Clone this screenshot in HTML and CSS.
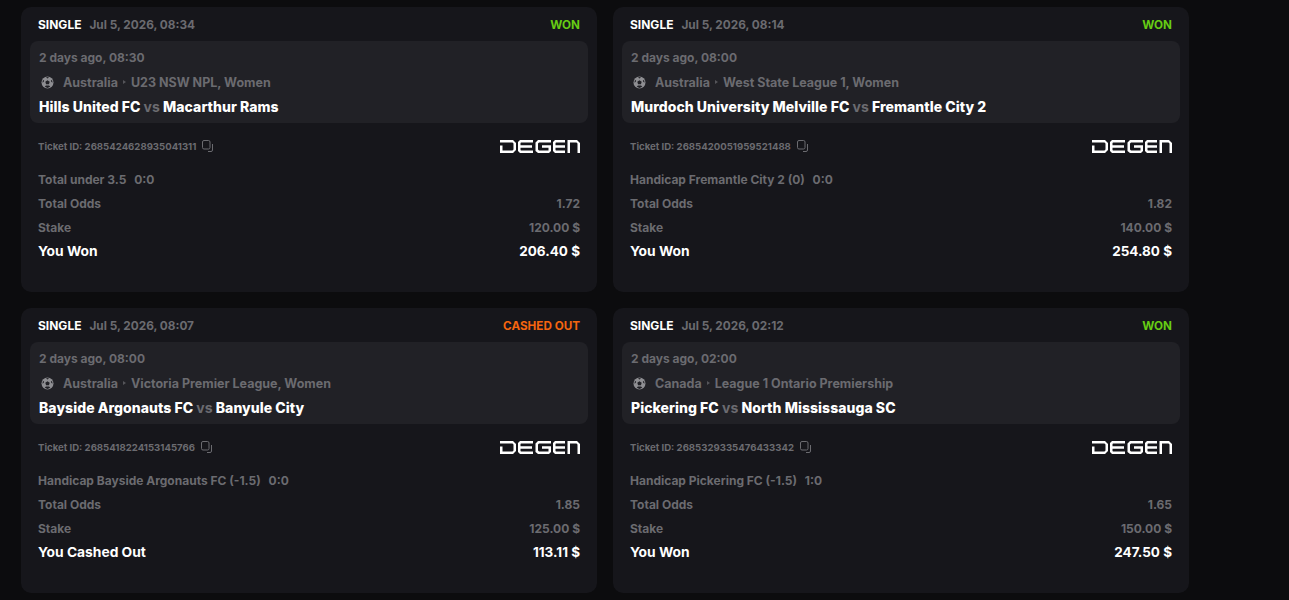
FILE: index.html
```html
<!DOCTYPE html>
<html lang="en">
<head>
    <meta charset="UTF-8">
    <meta name="viewport" content="width=device-width, initial-scale=1.0">
    <title>Bet history</title>
    <link rel="stylesheet" href="styles.css">
</head>
<body>
    <svg class="defs" width="0" height="0">
        <symbol id="ball" viewBox="0 0 13 13">
            <circle cx="6.500" cy="6.500" r="6" fill="#8e8e92"/>
            <path d="M6.500 4.200 8.700 5.800 7.900 8.300H5.100L4.300 5.800Z" fill="#212126"/>
            <path d="M5 1.500 6.500 2.400 8 1.500 6.500 1ZM1.800 4.600 1.500 6.800 2.800 5.800 3.100 4ZM11.200 4.600 11.500 6.800 10.200 5.800 9.900 4ZM3.800 10.800 4.900 9.600H8.100L9.200 10.800 6.500 11.900Z" fill="#212126"/>
        </symbol>
        <symbol id="copy" viewBox="0 0 12 12">
            <rect x=".5" y=".5" width="7.500" height="8.500" rx="1.500" fill="none" stroke="currentColor"/>
            <path d="M10.500 4v6a1.500 1.500 0 0 1-1.500 1.500H6" fill="none" stroke="currentColor"/>
        </symbol>
        <symbol id="degen" viewBox="0 0 80 13">
            <path fill="currentColor" d="M0 0H13L16 3V10L13 13H0V5.500H2.500V10.500H12.500L13.500 9.500V3.500L12.500 2.500H0Z"/>
            <path fill="currentColor" d="M20 0H33V2.500H21L20.500 3V5.300H32V7.700H20.500V10L21 10.500H33V13H20L18 11V2Z"/>
            <path fill="currentColor" d="M38 0H51V2.500H39L38 3.500V9.500L39 10.500H48.500V7.700H42V5.300H51V11L49 13H38L35.500 11V2.500Z"/>
            <path fill="currentColor" d="M55 0H65V2.500H56L55.500 3V5.300H65V7.700H55.500V10L56 10.500H65V13H55L53 11V2Z"/>
            <path fill="currentColor" d="M67.500 0H77L80 3V13H77.500V3.500L76.500 2.500H70V13H67.500Z"/>
        </symbol>
    </svg>

    <div class="tickets">
        <div class="card">
            <div class="card-head">
                <div><span class="type">SINGLE</span><span class="date">Jul 5, 2026, 08:34</span></div>
                <span class="status won">WON</span>
            </div>
            <div class="match">
                <div class="match-time">2 days ago, 08:30</div>
                <div class="league">
                    <svg class="ball"><use href="#ball"/></svg>
                    <span>Australia</span><i class="arrow"></i><span>U23 NSW NPL, Women</span>
                </div>
                <div class="teams">Hills United FC <em>vs</em> Macarthur Rams</div>
            </div>
            <div class="ticket-row">
                <div class="ticket-id">Ticket ID: 2685424628935041311 <svg class="copy"><use href="#copy"/></svg></div>
                <svg class="logo"><use href="#degen"/></svg>
            </div>
            <div class="line"><span>Total under 3.5 <b>0:0</b></span></div>
            <div class="line"><span>Total Odds</span><span>1.72</span></div>
            <div class="line"><span>Stake</span><span>120.00 $</span></div>
            <div class="line total"><span>You Won</span><span class="amount">206.40 $</span></div>
        </div>

        <div class="card">
            <div class="card-head">
                <div><span class="type">SINGLE</span><span class="date">Jul 5, 2026, 08:14</span></div>
                <span class="status won">WON</span>
            </div>
            <div class="match">
                <div class="match-time">2 days ago, 08:00</div>
                <div class="league">
                    <svg class="ball"><use href="#ball"/></svg>
                    <span>Australia</span><i class="arrow"></i><span>West State League 1, Women</span>
                </div>
                <div class="teams">Murdoch University Melville FC <em>vs</em> Fremantle City 2</div>
            </div>
            <div class="ticket-row">
                <div class="ticket-id">Ticket ID: 2685420051959521488 <svg class="copy"><use href="#copy"/></svg></div>
                <svg class="logo"><use href="#degen"/></svg>
            </div>
            <div class="line"><span>Handicap Fremantle City 2 (0) <b>0:0</b></span></div>
            <div class="line"><span>Total Odds</span><span>1.82</span></div>
            <div class="line"><span>Stake</span><span>140.00 $</span></div>
            <div class="line total"><span>You Won</span><span class="amount">254.80 $</span></div>
        </div>

        <div class="card">
            <div class="card-head">
                <div><span class="type">SINGLE</span><span class="date">Jul 5, 2026, 08:07</span></div>
                <span class="status cashed">CASHED OUT</span>
            </div>
            <div class="match">
                <div class="match-time">2 days ago, 08:00</div>
                <div class="league">
                    <svg class="ball"><use href="#ball"/></svg>
                    <span>Australia</span><i class="arrow"></i><span>Victoria Premier League, Women</span>
                </div>
                <div class="teams">Bayside Argonauts FC <em>vs</em> Banyule City</div>
            </div>
            <div class="ticket-row">
                <div class="ticket-id">Ticket ID: 2685418224153145766 <svg class="copy"><use href="#copy"/></svg></div>
                <svg class="logo"><use href="#degen"/></svg>
            </div>
            <div class="line"><span>Handicap Bayside Argonauts FC (-1.5) <b>0:0</b></span></div>
            <div class="line"><span>Total Odds</span><span>1.85</span></div>
            <div class="line"><span>Stake</span><span>125.00 $</span></div>
            <div class="line total"><span>You Cashed Out</span><span class="amount">113.11 $</span></div>
        </div>

        <div class="card">
            <div class="card-head">
                <div><span class="type">SINGLE</span><span class="date">Jul 5, 2026, 02:12</span></div>
                <span class="status won">WON</span>
            </div>
            <div class="match">
                <div class="match-time">2 days ago, 02:00</div>
                <div class="league">
                    <svg class="ball"><use href="#ball"/></svg>
                    <span>Canada</span><i class="arrow"></i><span>League 1 Ontario Premiership</span>
                </div>
                <div class="teams">Pickering FC <em>vs</em> North Mississauga SC</div>
            </div>
            <div class="ticket-row">
                <div class="ticket-id">Ticket ID: 2685329335476433342 <svg class="copy"><use href="#copy"/></svg></div>
                <svg class="logo"><use href="#degen"/></svg>
            </div>
            <div class="line"><span>Handicap Pickering FC (-1.5) <b>1:0</b></span></div>
            <div class="line"><span>Total Odds</span><span>1.65</span></div>
            <div class="line"><span>Stake</span><span>150.00 $</span></div>
            <div class="line total"><span>You Won</span><span class="amount">247.50 $</span></div>
        </div>
    </div>
</body>
</html>
```

FILE: styles.css
```css
html, body {
    height: 100%;
}
body {
    margin: 0;
    overflow: hidden;
    font-family: Inter, "Liberation Sans", sans-serif;
    font-size: 12px;
    font-weight: 700;
    color: #6b6b70;
    background-color: #0c0c0e;
}
.defs {
    display: block;
}
.tickets {
    display: grid;
    grid-template-columns: 576px 576px;
    grid-auto-rows: 285px;
    gap: 16px;
    padding: 7px 0 0 21px;
}
.card {
    padding: 0 9px;
    background-color: #16161b;
    border-radius: 10px;
}
.card-head {
    display: flex;
    justify-content: space-between;
    align-items: center;
    height: 34px;
    padding-left: 8px;
}
.type {
    color: #fff;
}
.date {
    margin-left: 8px;
    font-size: 11.800px;
}
.status {
    padding: 1px 8px 0 0;
    font-size: 11.700px;
}
.won {
    color: #66cc14;
}
.cashed {
    color: #f5650f;
}
.match {
    height: 82px;
    box-sizing: border-box;
    padding: 5px 9px 0;
    background-color: #212126;
    border-radius: 8px;
}
.match-time {
    height: 24px;
    line-height: 24px;
}
.league {
    display: flex;
    align-items: center;
    height: 24px;
    font-size: 12.500px;
}
.ball {
    width: 13px;
    height: 13px;
    margin: 0 9px 0 2px;
}
.arrow {
    width: 0;
    height: 0;
    margin: 0 5px;
    border-left: 3px solid #55555a;
    border-top: 2px solid transparent;
    border-bottom: 2px solid transparent;
}
.teams {
    height: 24px;
    line-height: 26px;
    color: #fff;
    font-size: 14px;
    font-weight: 800;
    letter-spacing: .05px;
}
.teams em {
    color: #6b6b70;
    font-style: normal;
    font-weight: 700;
}
.ticket-row {
    display: flex;
    justify-content: space-between;
    align-items: center;
    height: 44px;
    box-sizing: border-box;
    padding: 2px 8px 0;
}
.ticket-id {
    display: flex;
    align-items: center;
    gap: 4px;
    font-size: 9.600px;
}
.copy {
    width: 12px;
    height: 12px;
    margin-left: 2px;
}
.logo {
    width: 80px;
    height: 13px;
    color: #fff;
}
.line {
    display: flex;
    justify-content: space-between;
    align-items: center;
    height: 24px;
    padding: 0 8px;
}
.line b {
    margin-left: 5px;
    font-weight: 700;
}
.total {
    color: #fff;
    font-size: 13.800px;
}
.amount {
    font-size: 13.500px;
}
```
